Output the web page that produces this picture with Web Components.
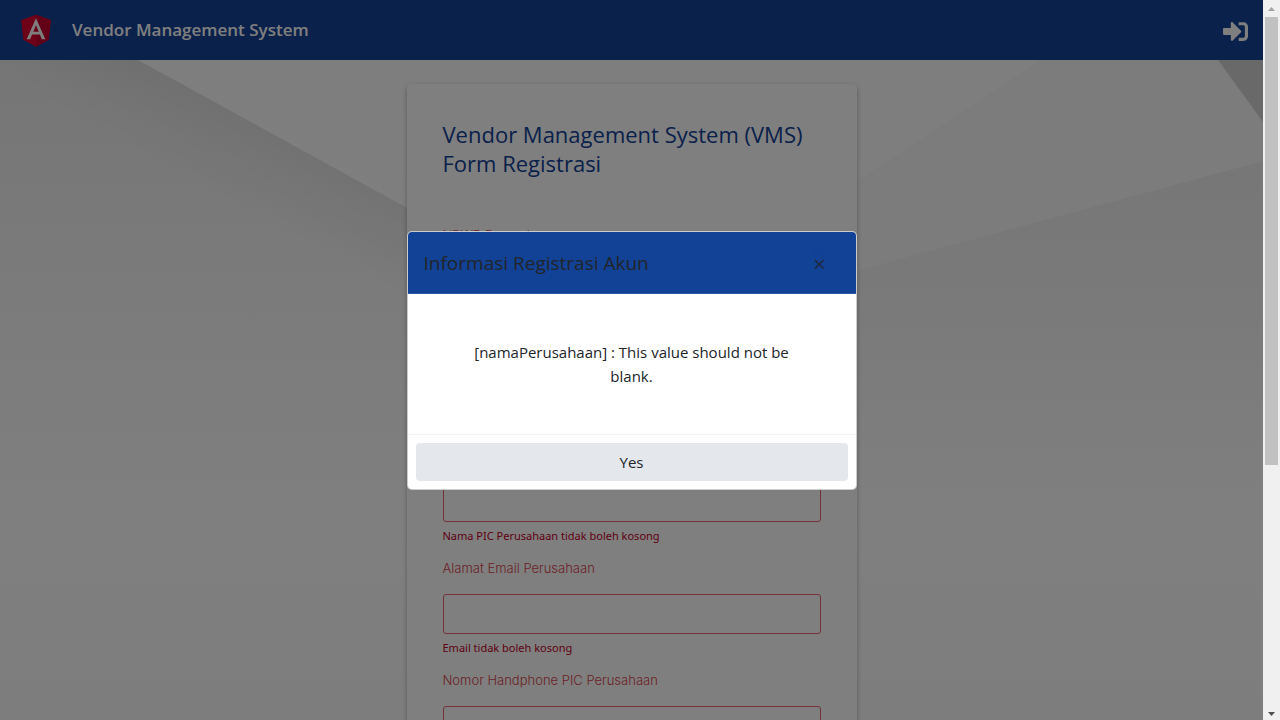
<!DOCTYPE html>
<html lang="id">
<head>
<meta charset="utf-8">
<meta name="viewport" content="width=device-width, initial-scale=1">
<title>Vendor Management System</title>
<style>
  html, body { margin: 0; height: 100%; }
  body { font-family: "Open Sans", "Noto Sans", sans-serif; font-size: 15px; color: #212529; overflow: hidden; }
</style>
</head>
<body>
<vms-app>
  <vms-navbar slot="nav">Vendor Management System</vms-navbar>
  <vms-card>
    <span slot="title">Vendor Management System (VMS)</span>
    <span slot="subtitle">Form Registrasi</span>
    <vms-field compact label="NPWP Perusahaan" error="NPWP tidak boleh kosong"></vms-field>
    <vms-field label="Nama Perusahaan" error="Nama Perusahaan tidak boleh kosong"></vms-field>
    <vms-field label="Nama PIC Perusahaan" error="Nama PIC Perusahaan tidak boleh kosong"></vms-field>
    <vms-field label="Alamat Email Perusahaan" type="email" error="Email tidak boleh kosong"></vms-field>
    <vms-field label="Nomor Handphone PIC Perusahaan" type="tel"></vms-field>
  </vms-card>
  <vms-dialog slot="dialog">
    <span slot="title">Informasi Registrasi Akun</span>
    [namaPerusahaan] : This value should not be blank.
    <span slot="action">Yes</span>
  </vms-dialog>
</vms-app>

<script>
class VmsElement extends HTMLElement {
  constructor() {
    super();
    this.attachShadow({ mode: 'open' });
  }
  connectedCallback() {
    this.shadowRoot.innerHTML = '<style>:host,*{box-sizing:border-box}' + this.styles() + '</style>' + this.markup();
  }
}

// Application frame: page viewport with its scroll bar beside it.
class VmsApp extends VmsElement {
  styles() { return `
    :host { display: grid; grid-template-columns: minmax(0, 1fr) auto; height: 100vh; }
    .view { position: relative; display: flex; flex-direction: column; overflow: hidden; min-height: 0; }
    main { position: relative; flex: 1; min-height: 0; overflow: hidden; padding: 24px 16px; }
    vms-backdrop { position: absolute; inset: 0; }
    .content { position: relative; display: flex; justify-content: center; }
  `; }
  markup() { return `
    <div class="view">
      <slot name="nav"></slot>
      <main><vms-backdrop></vms-backdrop><div class="content"><slot></slot></div></main>
      <slot name="dialog"></slot>
    </div>
    <vms-scrollbar></vms-scrollbar>`; }
}

class VmsNavbar extends VmsElement {
  styles() { return `
    :host { display: block; }
    header { display: flex; align-items: center; height: 60px; padding: 0 15px 0 16px; background: #124296; color: #fff; }
    .logo { width: 40px; height: 40px; }
    h1 { flex: 1; margin: 0 0 0 16px; font-size: 17px; line-height: 24px; font-weight: 600; }
    a { display: flex; padding-top: 2px; color: inherit; }
  `; }
  markup() { return `
    <header>
      <svg class="logo" viewBox="0 0 250 250" aria-hidden="true">
        <path fill="#dd0031" d="M125 30 31.9 63.2l14.2 123.1L125 230l78.9-43.7 14.2-123.1z"/>
        <path fill="#c3002f" d="M125 30v22.2-.1V230l78.9-43.7 14.2-123.1z"/>
        <path fill="#fff" d="M125 52.1 66.8 182.6h21.7l11.7-29.2h49.4l11.7 29.2H183zm17 83.3h-34l17-40.9z"/>
      </svg>
      <h1><slot></slot></h1>
      <a href="#login" aria-label="Login">
        <svg width="25" height="25" viewBox="0 0 512 512" fill="currentColor" aria-hidden="true"><path d="M416 448h-84c-6.6 0-12-5.4-12-12v-40c0-6.6 5.4-12 12-12h84c17.700 0 32-14.300 32-32V160c0-17.700-14.300-32-32-32h-84c-6.600 0-12-5.400-12-12V76c0-6.600 5.400-12 12-12h84c53 0 96 43 96 96v192c0 53-43 96-96 96zm-47-209L201 71c-15-15-41-4.500-41 17v96H24c-13.300 0-24 10.700-24 24v96c0 13.300 10.700 24 24 24h136v96c0 21.500 26 32 41 17l168-168c9.300-9.400 9.300-24.600 0-34z"/></svg>
      </a>
    </header>`; }
}

// Pale faceted wallpaper that stretches with the page.
class VmsBackdrop extends VmsElement {
  styles() { return `:host { display: block; } svg { display: block; width: 100%; height: 100%; }`; }
  markup() { return `
    <svg viewBox="0 0 1263 660" preserveAspectRatio="none" aria-hidden="true">
      <defs>
        <linearGradient id="base" x1="0" y1="0" x2="0" y2="1"><stop offset="0" stop-color="#fdfdfd"/><stop offset=".7" stop-color="#ffffff"/><stop offset="1" stop-color="#fbfbfb"/></linearGradient>
        <linearGradient id="left" gradientUnits="userSpaceOnUse" x1="0" y1="0" x2="0" y2="450"><stop offset="0" stop-color="#ececec"/><stop offset=".5" stop-color="#f6f6f6"/><stop offset="1" stop-color="#ffffff"/></linearGradient>
        <linearGradient id="edge" gradientUnits="userSpaceOnUse" x1="272" y1="74" x2="234" y2="144"><stop offset="0" stop-color="#000" stop-opacity=".05"/><stop offset="1" stop-color="#000" stop-opacity="0"/></linearGradient>
        <linearGradient id="right" gradientUnits="userSpaceOnUse" x1="0" y1="101" x2="0" y2="450"><stop offset="0" stop-color="#eeeeee"/><stop offset=".4" stop-color="#f4f4f4"/><stop offset="1" stop-color="#ffffff"/></linearGradient>
      </defs>
      <path fill="url(#base)" d="M0 0h1263v660H0z"/>
      <path fill="url(#left)" d="M0 0h138L600 254v196H0z"/>
      <path fill="url(#edge)" d="M0 0h138L600 254v196H0z"/>
      <path fill="#f9f9f9" d="M1040 0h223v120L600 290z"/>
      <path fill="url(#right)" d="M1263 101 600 280v170h663z"/>
      <path fill="#d3d3d3" d="M1218 0h45v62z"/>
    </svg>`; }
}

class VmsScrollbar extends VmsElement {
  styles() { return `
    :host { display: flex; flex-direction: column; width: 17px; background: #f0f0f0; }
    svg { display: block; width: 17px; height: 17px; }
    .track { flex: 1; padding: 0 2px; }
    .thumb { height: 65.3%; background: #c1c1c1; }
  `; }
  markup() { return `
    <svg viewBox="0 0 17 17" aria-hidden="true"><path fill="#a3a3a3" d="M5 11h7L8.500 7z"/></svg>
    <div class="track"><div class="thumb"></div></div>
    <svg viewBox="0 0 17 17" aria-hidden="true"><path fill="#505050" d="M5 9h7l-3.500 4z"/></svg>`; }
}

class VmsCard extends VmsElement {
  styles() { return `
    :host { display: block; width: 450px; max-width: 100%; padding: 36px; background: #fff; border-radius: 4px; box-shadow: 0 2px 5px rgba(0, 0, 0, .3); }
    h2 { margin: 0 0 45px; font-size: 22px; line-height: 29px; font-weight: 400; color: #124296; }
    ::slotted(span) { display: block; }
  `; }
  markup() { return `
    <h2><slot name="title"></slot><slot name="subtitle"></slot></h2>
    <form><slot></slot></form>`; }
}

class VmsField extends VmsElement {
  styles() { return `
    :host { display: block; margin-bottom: 12px; }
    :host([compact]) { margin-bottom: 9px; }
    label { display: block; font-family: Inter, sans-serif; font-size: 13px; line-height: 24px; font-weight: 300; color: #d8434e; }
    input { display: block; width: 100%; height: 40px; margin-top: 14px; padding: 0 12px; border: 1px solid #ee6070; border-radius: 3px; background: #fff; font: inherit; }
    p { margin: 6px 0 0; font-family: "Noto Sans", sans-serif; font-size: 11px; line-height: 16px; color: #c00026; }
  `; }
  markup() {
    const error = this.getAttribute('error');
    return `
    <label for="value">${this.getAttribute('label')}</label>
    <input id="value" type="${this.getAttribute('type') || 'text'}" aria-invalid="true"${error ? ' aria-describedby="error"' : ''}>
    ${error ? `<p id="error">${error}</p>` : ''}`;
  }
}

class VmsDialog extends VmsElement {
  styles() { return `
    :host { position: absolute; inset: 0; display: flex; align-items: center; justify-content: center; background: rgba(0, 0, 0, .5); }
    section { width: 450px; max-width: 100%; border: 1px solid rgba(0, 0, 0, .2); border-radius: 5px; background: #fff; overflow: hidden; }
    header { display: flex; align-items: center; justify-content: space-between; padding: 16px 16px 15px; border-bottom: 1px solid #2a5aa8; background: #124296; }
    h2 { margin: 0; font-size: 19px; line-height: 30px; font-weight: 400; }
    button { border: 0; font: inherit; color: inherit; }
    .close { width: 40px; height: 30px; padding: 0; background: none; font-size: 22px; line-height: 30px; opacity: .8; }
    .body { padding: 46px 48px; line-height: 24px; text-align: center; }
    footer { padding: 8px; border-top: 1px solid #f0f2f5; }
    .action { display: block; width: 100%; height: 38px; border-radius: 4px; background: #e4e7eb; }
  `; }
  markup() { return `
    <section role="dialog" aria-modal="true" aria-labelledby="title">
      <header><h2 id="title"><slot name="title"></slot></h2><button class="close" type="button" aria-label="Close">×</button></header>
      <div class="body"><slot></slot></div>
      <footer><button class="action" type="button"><slot name="action"></slot></button></footer>
    </section>`; }
}

customElements.define('vms-backdrop', VmsBackdrop);
customElements.define('vms-scrollbar', VmsScrollbar);
customElements.define('vms-navbar', VmsNavbar);
customElements.define('vms-field', VmsField);
customElements.define('vms-card', VmsCard);
customElements.define('vms-dialog', VmsDialog);
customElements.define('vms-app', VmsApp);
</script>
</body>
</html>
